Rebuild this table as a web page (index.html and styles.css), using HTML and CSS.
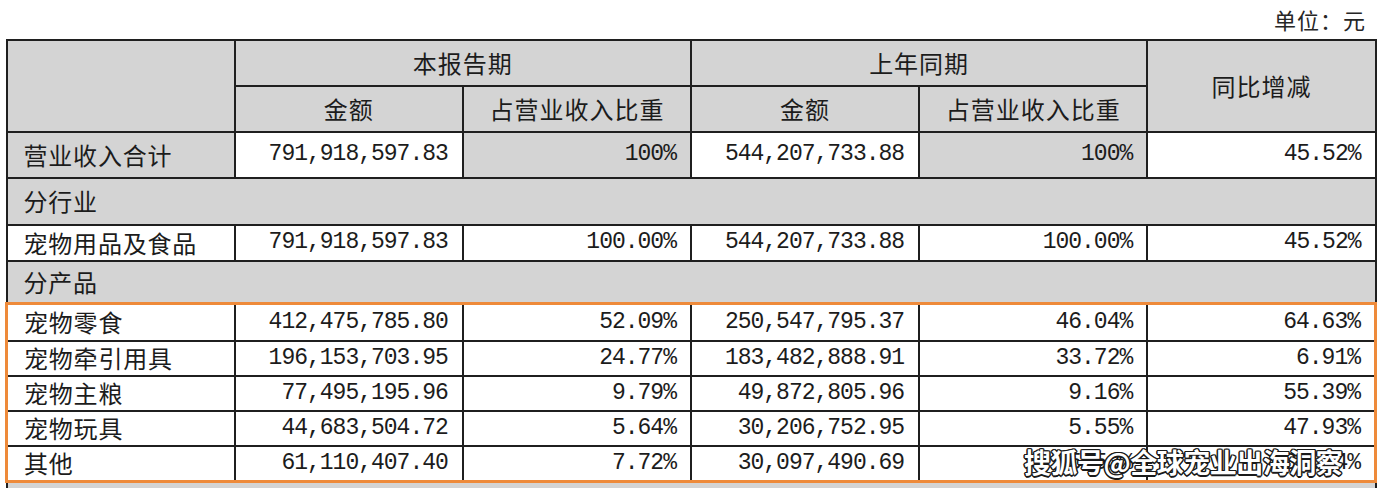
FILE: index.html
```html
<!DOCTYPE html>
<html lang="zh-CN">
<head>
<meta charset="utf-8">
<title>营业收入构成</title>
<link rel="stylesheet" href="styles.css">
</head>
<body>
<div class="page">
  <div class="unit">单位：元</div>
  <table class="report">
    <colgroup>
      <col class="c-name"><col class="c-num"><col class="c-num"><col class="c-num"><col class="c-num"><col class="c-num">
    </colgroup>
    <thead>
      <tr class="h1">
        <th rowspan="2" class="grey"></th>
        <th colspan="2" class="grey">本报告期</th>
        <th colspan="2" class="grey">上年同期</th>
        <th rowspan="2" class="grey">同比增减</th>
      </tr>
      <tr class="h2">
        <th class="grey">金额</th>
        <th class="grey">占营业收入比重</th>
        <th class="grey">金额</th>
        <th class="grey">占营业收入比重</th>
      </tr>
    </thead>
    <tbody>
      <tr class="r-total">
        <td class="name grey">营业收入合计</td>
        <td class="num">791,918,597.83</td>
        <td class="num grey">100%</td>
        <td class="num">544,207,733.88</td>
        <td class="num grey">100%</td>
        <td class="num">45.52%</td>
      </tr>
      <tr class="r-sec1">
        <td class="name grey" colspan="6">分行业</td>
      </tr>
      <tr class="r-ind">
        <td class="name">宠物用品及食品</td>
        <td class="num">791,918,597.83</td>
        <td class="num">100.00%</td>
        <td class="num">544,207,733.88</td>
        <td class="num">100.00%</td>
        <td class="num">45.52%</td>
      </tr>
      <tr class="r-sec2">
        <td class="name grey" colspan="6">分产品</td>
      </tr>
    </tbody>
    <tbody class="highlight">
      <tr class="r-p1">
        <td class="name">宠物零食</td>
        <td class="num">412,475,785.80</td>
        <td class="num">52.09%</td>
        <td class="num">250,547,795.37</td>
        <td class="num">46.04%</td>
        <td class="num">64.63%</td>
      </tr>
      <tr class="r-p">
        <td class="name">宠物牵引用具</td>
        <td class="num">196,153,703.95</td>
        <td class="num">24.77%</td>
        <td class="num">183,482,888.91</td>
        <td class="num">33.72%</td>
        <td class="num">6.91%</td>
      </tr>
      <tr class="r-p">
        <td class="name">宠物主粮</td>
        <td class="num">77,495,195.96</td>
        <td class="num">9.79%</td>
        <td class="num">49,872,805.96</td>
        <td class="num">9.16%</td>
        <td class="num">55.39%</td>
      </tr>
      <tr class="r-p">
        <td class="name">宠物玩具</td>
        <td class="num">44,683,504.72</td>
        <td class="num">5.64%</td>
        <td class="num">30,206,752.95</td>
        <td class="num">5.55%</td>
        <td class="num">47.93%</td>
      </tr>
      <tr class="r-p">
        <td class="name">其他</td>
        <td class="num">61,110,407.40</td>
        <td class="num">7.72%</td>
        <td class="num">30,097,490.69</td>
        <td class="num">5.53%</td>
        <td class="num">103.04%</td>
      </tr>
    </tbody>
    <tbody>
      <tr class="r-sec3">
        <td class="grey" colspan="6"></td>
      </tr>
    </tbody>
  </table>
  <div class="watermark">搜狐号@全球宠业出海洞察</div>
</div>
</body>
</html>
```

FILE: styles.css
```css
html, body {
  margin: 0;
  padding: 0;
  background: #ffffff;
}

body {
  width: 1384px;
  height: 488px;
  overflow: hidden;
  font-family: "Noto Sans CJK SC", "Noto Sans", sans-serif;
  color: #1c1c1c;
}

.page {
  position: relative;
  width: 1384px;
  height: 488px;
  overflow: hidden;
}

.unit {
  height: 39px;
  line-height: 38px;
  font-size: 22px;
  text-align: right;
  padding-right: 18px;
  color: #262626;
  letter-spacing: 1px;
}

.report {
  border-collapse: collapse;
  table-layout: fixed;
  width: 1372px;
  margin-left: 5px;
}

.c-name { width: 228px; }
.c-num { width: 228px; }

.report th,
.report td {
  border: 2px solid #1f1f1f;
  padding: 0;
  line-height: 1.1;
  background: #ffffff;
  overflow: hidden;
  white-space: nowrap;
}

.report th {
  font-weight: 400;
  font-size: 24px;
  letter-spacing: 1px;
  text-align: center;
  vertical-align: middle;
}

.report .grey {
  background: #d4d4d4;
}

.report .name {
  font-size: 24px;
  letter-spacing: 0.8px;
  text-align: left;
  padding-left: 16px;
}

.report .num {
  font-family: "Liberation Mono", "DejaVu Sans Mono", monospace;
  font-size: 23px;
  letter-spacing: -1px;
  text-align: right;
  padding-right: 14px;
}

.h1 { height: 46px; }
.h2 { height: 46px; }
.r-total { height: 46px; }
.r-sec1 { height: 47px; }
.r-ind { height: 36px; }
.r-sec2 { height: 42px; }
.r-p1 { height: 38px; }
.r-p { height: 35px; }
.r-sec3 { height: 40px; }

.report tbody.highlight {
  border: 3px solid #ee8a3a;
}

.watermark {
  position: absolute;
  left: 1024px;
  top: 442px;
  font-size: 27px;
  font-weight: 700;
  color: #ffffff;
  letter-spacing: -0.5px;
  text-shadow:
    1.5px 0 0 #1a1a1a, -1.5px 0 0 #1a1a1a,
    0 1.5px 0 #1a1a1a, 0 -1.5px 0 #1a1a1a,
    1px 1px 0 #1a1a1a, -1px -1px 0 #1a1a1a,
    1px -1px 0 #1a1a1a, -1px 1px 0 #1a1a1a;
}
```
